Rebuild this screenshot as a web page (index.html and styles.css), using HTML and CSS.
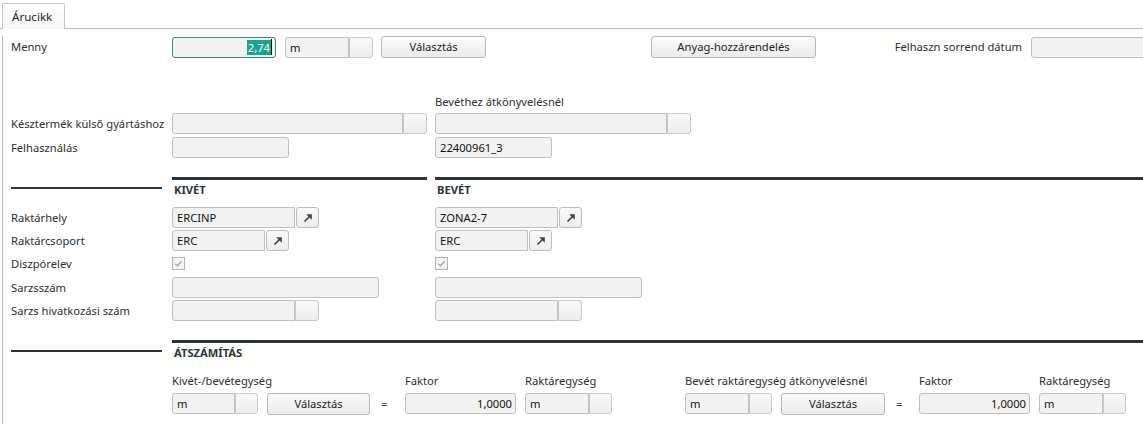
FILE: index.html
```html
<!DOCTYPE html>
<html>
<head>
<meta charset="utf-8">
<link rel="stylesheet" href="styles.css">
</head>
<body>
<div class="window">
  <div class="tabstrip"><div class="tab">Árucikk</div></div>
  <div class="page">
    <div class="row row-top">
      <div class="lbl lbl-main">Menny</div>
      <div class="field focus w104"><span class="sel">2,74</span><span class="caret"></span></div>
      <div class="combo ml9"><div class="field w64">m</div><div class="sqbtn"></div></div>
      <div class="btn w105 ml8">Választás</div>
      <div class="btn w165 ml165">Anyag-hozzárendelés</div>
      <div class="lbl lbl-date">Felhaszn sorrend dátum</div>
      <div class="field w130 ml9"></div>
    </div>

    <div class="grid row-cap">
      <div></div><div></div><div class="cap">Bevéthez átkönyvelésnél</div>
    </div>
    <div class="grid row mt3">
      <div class="lbl">Késztermék külső gyártáshoz</div>
      <div class="combo"><div class="field w231"></div><div class="sqbtn"></div></div>
      <div class="combo"><div class="field w232"></div><div class="sqbtn"></div></div>
    </div>
    <div class="grid row mt3">
      <div class="lbl">Felhasználás</div>
      <div class="cell"><div class="field w117"></div></div>
      <div class="cell"><div class="field w117">22400961_3</div></div>
    </div>

    <div class="grid sechead">
      <div class="secline"></div>
      <div class="sectitle">KIVÉT</div>
      <div class="sectitle">BEVÉT</div>
    </div>
    <div class="grid row mt2">
      <div class="lbl">Raktárhely</div>
      <div class="combo"><div class="field w123">ERCINP</div><div class="arrbtn"><svg viewBox="0 0 10 10" width="10" height="10"><path d="M1.5 8.5 L7 3" stroke="#444" stroke-width="1.7" fill="none"/><polygon points="3.2,1.2 8.8,1.2 8.8,6.8" fill="#444"/></svg></div></div>
      <div class="combo"><div class="field w123">ZONA2-7</div><div class="arrbtn"><svg viewBox="0 0 10 10" width="10" height="10"><path d="M1.5 8.5 L7 3" stroke="#444" stroke-width="1.7" fill="none"/><polygon points="3.2,1.2 8.8,1.2 8.8,6.8" fill="#444"/></svg></div></div>
    </div>
    <div class="grid row mt2">
      <div class="lbl">Raktárcsoport</div>
      <div class="combo"><div class="field w93">ERC</div><div class="arrbtn"><svg viewBox="0 0 10 10" width="10" height="10"><path d="M1.5 8.5 L7 3" stroke="#444" stroke-width="1.7" fill="none"/><polygon points="3.2,1.2 8.8,1.2 8.8,6.8" fill="#444"/></svg></div></div>
      <div class="combo"><div class="field w93">ERC</div><div class="arrbtn"><svg viewBox="0 0 10 10" width="10" height="10"><path d="M1.5 8.5 L7 3" stroke="#444" stroke-width="1.7" fill="none"/><polygon points="3.2,1.2 8.8,1.2 8.8,6.8" fill="#444"/></svg></div></div>
    </div>
    <div class="grid row mt2">
      <div class="lbl">Diszpórelev</div>
      <div class="cell"><div class="check"><svg viewBox="0 0 11 11" width="11" height="11"><path d="M2.2 5.8 L4.4 7.8 L8.8 3.2" stroke="#a4a4a4" stroke-width="1.3" fill="none"/></svg></div></div>
      <div class="cell"><div class="check"><svg viewBox="0 0 11 11" width="11" height="11"><path d="M2.2 5.8 L4.4 7.8 L8.8 3.2" stroke="#a4a4a4" stroke-width="1.3" fill="none"/></svg></div></div>
    </div>
    <div class="grid row mt3">
      <div class="lbl">Sarzsszám</div>
      <div class="cell"><div class="field w207"></div></div>
      <div class="cell"><div class="field w207"></div></div>
    </div>
    <div class="grid row mt2">
      <div class="lbl">Sarzs hivatkozási szám</div>
      <div class="combo"><div class="field w123"></div><div class="sqbtn"></div></div>
      <div class="combo"><div class="field w123"></div><div class="sqbtn"></div></div>
    </div>

    <div class="grid sechead sechead2">
      <div class="secline"></div>
      <div class="sectitle wide">ÁTSZÁMÍTÁS</div>
    </div>

    <div class="conv">
      <div class="grp">
        <div class="cap">Kivét-/bevétegység</div>
        <div class="ctrls"><div class="combo"><div class="field w63">m</div><div class="sqbtn w23"></div></div><div class="btn w103 ml9">Választás</div></div>
      </div>
      <div class="eq">=</div>
      <div class="grp">
        <div class="cap">Faktor</div>
        <div class="ctrls"><div class="field w111 num">1,0000</div></div>
      </div>
      <div class="grp ml9">
        <div class="cap">Raktáregység</div>
        <div class="ctrls"><div class="combo"><div class="field w64">m</div><div class="sqbtn w23"></div></div></div>
      </div>
      <div class="grp ml73">
        <div class="cap">Bevét raktáregység átkönyvelésnél</div>
        <div class="ctrls"><div class="combo"><div class="field w64">m</div><div class="sqbtn w23"></div></div><div class="btn w104 ml9">Választás</div></div>
      </div>
      <div class="eq eq2">=</div>
      <div class="grp">
        <div class="cap">Faktor</div>
        <div class="ctrls"><div class="field w111 num">1,0000</div></div>
      </div>
      <div class="grp ml9">
        <div class="cap">Raktáregység</div>
        <div class="ctrls"><div class="combo"><div class="field w64">m</div><div class="sqbtn w23"></div></div></div>
      </div>
    </div>
  </div>
</div>
</body>
</html>
```

FILE: styles.css
```css
* { box-sizing: border-box; }
html, body { margin: 0; padding: 0; }
body {
  width: 1143px;
  height: 424px;
  overflow: hidden;
  background: #fff;
  font-family: "Noto Sans", "Open Sans", sans-serif;
  font-size: 11.2px;
  color: #333;
}
.window { height: 424px; }
.tabstrip {
  height: 29px;
  padding: 3px 0 0 2px;
  border-bottom: 1px solid #bababa;
  display: flex;
  align-items: flex-start;
}
.tab {
  width: 63px;
  height: 26px;
  border: 1px solid #c6c6c6;
  border-bottom: none;
  border-radius: 2px 2px 0 0;
  background: linear-gradient(#ffffff, #f6f6f6);
  padding-left: 9px;
  line-height: 25px;
  color: #222;
  font-size: 11.6px;
}
.page {
  margin-left: 2px;
  border-left: 1px solid #bababa;
  padding-left: 8px;
  height: 395px;
  white-space: nowrap;
}
.row { height: 21px; align-items: center; }
.row-top { display: flex; height: 22px; margin-top: 7px; }
.row-top > * { flex-shrink: 0; }
.mt2 { margin-top: 2px; }
.mt3 { margin-top: 3px; }
.grid {
  display: grid;
  grid-template-columns: 153px 255px 1fr;
  column-gap: 8px;
}
.row-cap { margin-top: 35px; height: 17px; align-items: center; }
.lbl { color: #2e2e2e; line-height: 16px; }
.lbl-main { width: 161px; }
.lbl-date { width: 206px; text-align: right; }
.cap { color: #2e2e2e; line-height: 16px; }
.cell { display: flex; align-items: center; }
.combo { display: flex; align-items: center; flex-shrink: 0; }
.combo > * { flex-shrink: 0; }

.field {
  flex-shrink: 0;
  height: 21px;
  background: #f2f2f2;
  border: 1px solid #bfbfbf;
  border-radius: 3px;
  padding: 0 4px;
  line-height: 19px;
  color: #111;
  display: flex;
  align-items: center;
  overflow: hidden;
}
.combo .field { border-radius: 3px 0 0 3px; }
.field.num { justify-content: flex-end; padding-right: 3px; }
.field.focus {
  border-color: #2f8f84;
  justify-content: flex-end;
  padding-right: 3px;
}
.sel {
  background: #1ba392;
  color: #fff;
  line-height: 15px;
  padding: 0 1px;
}
.caret { width: 1px; height: 16px; background: #000; }

.sqbtn, .arrbtn {
  width: 24px;
  height: 21px;
  border: 1px solid #c8c8c8;
  border-radius: 0 3px 3px 0;
  background: linear-gradient(#f9f9f9, #ededed);
  display: flex;
  align-items: center;
  justify-content: center;
}
.sqbtn.w23 { width: 23px; }
.arrbtn { width: 23px; margin-left: 1px; border-radius: 3px; border-color: #bdbdbd; }
.btn {
  flex-shrink: 0;
  height: 22px;
  border: 1px solid #b7b7b7;
  border-radius: 3px;
  background: linear-gradient(#fbfbfb, #ebebeb);
  color: #222;
  text-align: center;
  line-height: 20px;
}
.check {
  width: 13px;
  height: 13px;
  border: 1px solid #b2b2b2;
  background: #f4f4f4;
  display: flex;
  align-items: center;
  justify-content: center;
}

.w63 { width: 63px; }
.w64 { width: 64px; }
.w93 { width: 93px; }
.w103 { width: 103px; }
.w104 { width: 104px; }
.w105 { width: 105px; }
.w111 { width: 111px; }
.w117 { width: 117px; }
.w123 { width: 123px; }
.w130 { width: 130px; }
.w165 { width: 165px; }
.w207 { width: 207px; }
.w231 { width: 231px; }
.w232 { width: 232px; }
.ml8 { margin-left: 8px; }
.ml9 { margin-left: 9px; }
.ml73 { margin-left: 73px; }
.ml165 { margin-left: 165px; }

.sechead { margin-top: 19px; height: 28px; }
.secline { margin-top: 10px; height: 2px; background: #2c3435; width: 151px; }
.sectitle {
  border-top: 3px solid #2c3435;
  padding: 2px 0 0 2px;
  line-height: 16px;
  font-weight: bold;
  color: #2c3435;
}
.sectitle.wide { grid-column: 2 / 4; }
.sechead2 { height: 26px; }

.conv {
  display: flex;
  margin-top: 7px;
  padding-left: 161px;
}
.conv > * { flex-shrink: 0; }
.grp { display: flex; flex-direction: column; }
.grp .cap { height: 16px; margin-bottom: 4px; }
.ctrls { display: flex; align-items: center; height: 21px; }
.eq {
  width: 35px;
  padding: 20px 0 0 11px;
  line-height: 21px;
  color: #333;
}
.eq.eq2 { width: 34px; }
```
